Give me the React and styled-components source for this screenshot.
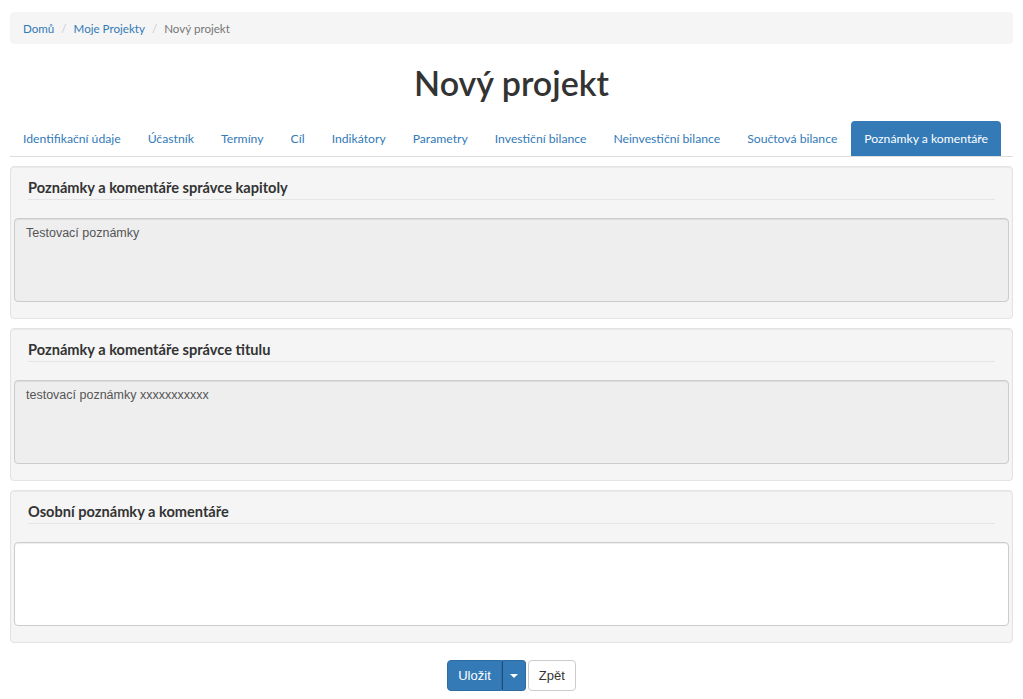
import React from 'react';
import styled, { createGlobalStyle } from 'styled-components';

const GlobalStyle = createGlobalStyle`
  body {
    margin: 0;
    background: #fff;
    font-family: Lato, "Open Sans", sans-serif;
    color: #333;
  }
`;

const Page = styled.div`
  padding: 12px 10px 0;
`;

const Breadcrumb = styled.ol`
  list-style: none;
  margin: 0;
  padding: 0 13px;
  height: 32px;
  display: flex;
  align-items: center;
  background: #f5f5f5;
  border-radius: 4px;
  font-size: 11.6px;
`;

const Crumb = styled.li`
  color: ${p => (p.active ? '#777' : '#337ab7')};
  &:not(:first-child)::before {
    content: "/";
    color: #ccc;
    padding: 0 7px;
  }
`;

const Title = styled.h1`
  margin: 18px 0 0;
  height: 54px;
  text-align: center;
  font-size: 34px;
  font-weight: 600;
  color: #333;
  line-height: 42px;
`;

const Tabs = styled.ul`
  list-style: none;
  margin: 5px 0 0;
  padding: 0;
  display: flex;
  border-bottom: 1px solid #ddd;
`;

const Tab = styled.li`
  height: 35px;
  padding: 0 13px;
  margin-right: 1px;
  display: flex;
  align-items: center;
  white-space: nowrap;
  font-size: 12.2px;
  border-radius: 4px 4px 0 0;
  color: ${p => (p.active ? '#fff' : '#337ab7')};
  background: ${p => (p.active ? '#337ab7' : 'transparent')};
`;

const Panel = styled.section`
  margin-top: 9px;
  padding: 0 3px 16px;
  background: #f5f5f5;
  border: 1px solid #e3e3e3;
  border-radius: 4px;
  box-shadow: inset 0 1px 1px rgba(0, 0, 0, 0.05);
`;

const Heading = styled.h4`
  margin: 0 14px;
  padding: 11px 0 0;
  height: 21px;
  line-height: 20px;
  font-size: 14.6px;
  font-weight: 700;
  color: #333;
  border-bottom: 1px solid #e5e5e5;
`;

const Area = styled.div`
  margin-top: 18px;
  height: 70px;
  padding: 5px 11px 7px;
  border: 1px solid #ccc;
  border-radius: 4px;
  background: ${p => (p.readOnly ? '#eee' : '#fff')};
  box-shadow: inset 0 1px 1px rgba(0, 0, 0, 0.075);
  font-family: "Liberation Sans", Arial, sans-serif;
  font-size: 12.5px;
  color: #555;
  line-height: 18px;
`;

const Actions = styled.div`
  display: flex;
  justify-content: center;
  gap: 2px;
  margin-top: 17px;
`;

const ButtonGroup = styled.div`
  display: flex;
`;

const Btn = styled.button`
  height: 31px;
  padding: 0 ${p => (p.caret ? '7px' : '10px')};
  font-family: "Liberation Sans", Arial, sans-serif;
  font-size: 13px;
  border: 1px solid ${p => (p.primary ? '#2e6da4' : '#ccc')};
  background: ${p => (p.primary ? '#337ab7' : '#fff')};
  color: ${p => (p.primary ? '#fff' : '#333')};
  border-radius: ${p => p.radius || '4px'};
  display: flex;
  align-items: center;
`;

const CaretBtn = styled(Btn)`
  border-left-color: #204d74;
`;

const Caret = styled.span`
  width: 0;
  height: 0;
  border-left: 4px solid transparent;
  border-right: 4px solid transparent;
  border-top: 4px solid #fff;
`;

const tabs = [
  'Identifikační údaje',
  'Účastník',
  'Termíny',
  'Cíl',
  'Indikátory',
  'Parametry',
  'Investiční bilance',
  'Neinvestiční bilance',
  'Součtová bilance',
  'Poznámky a komentáře',
];

const panels = [
  { title: 'Poznámky a komentáře správce kapitoly', text: 'Testovací poznámky', readOnly: true },
  { title: 'Poznámky a komentáře správce titulu', text: 'testovací poznámky xxxxxxxxxxx', readOnly: true },
  { title: 'Osobní poznámky a komentáře', text: '', readOnly: false },
];

const App = () => {
  return (
    <Page>
      <GlobalStyle />
      <Breadcrumb>
        <Crumb>Domů</Crumb>
        <Crumb>Moje Projekty</Crumb>
        <Crumb active>Nový projekt</Crumb>
      </Breadcrumb>

      <Title>Nový projekt</Title>

      <Tabs>
        {tabs.map((t, i) => (
          <Tab key={t} active={i === tabs.length - 1}>{t}</Tab>
        ))}
      </Tabs>

      {panels.map(p => (
        <Panel key={p.title}>
          <Heading>{p.title}</Heading>
          <Area readOnly={p.readOnly}>{p.text}</Area>
        </Panel>
      ))}

      <Actions>
        <ButtonGroup>
          <Btn primary radius="4px 0 0 4px">Uložit</Btn>
          <CaretBtn primary caret radius="0 4px 4px 0">
            <Caret />
          </CaretBtn>
        </ButtonGroup>
        <Btn>Zpět</Btn>
      </Actions>
    </Page>
  );
};

export default App;
